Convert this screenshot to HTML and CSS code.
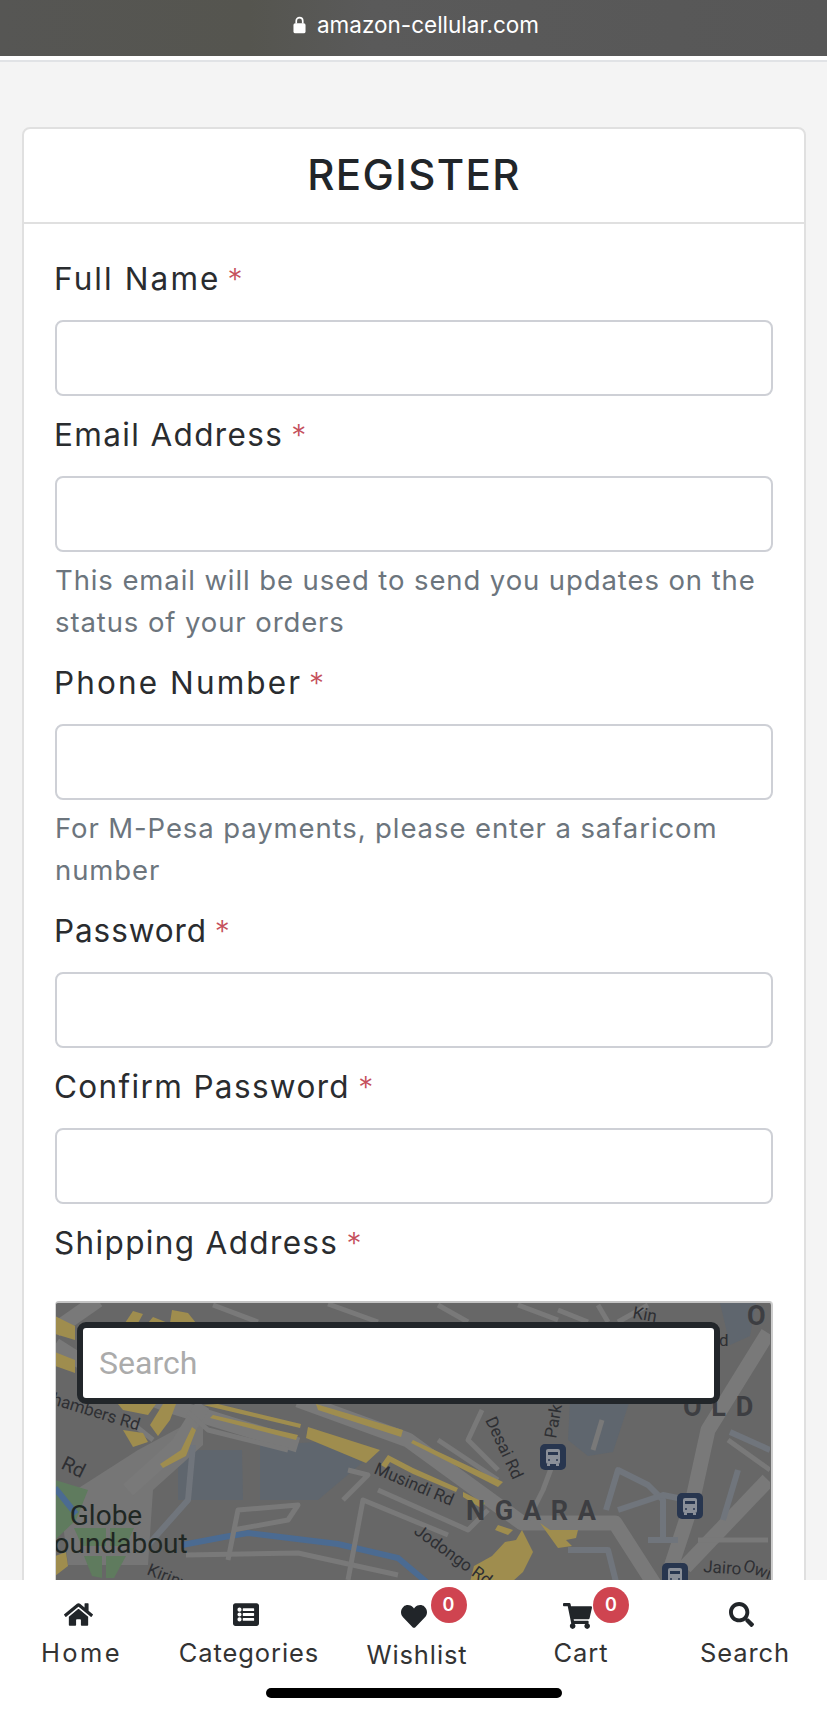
FILE: index.html
```html
<!DOCTYPE html>
<html lang="en">
<head>
<meta charset="utf-8">
<title>Register</title>
<link rel="stylesheet" href="styles.css">
</head>
<body>
<header class="urlbar">
  <svg class="lock" viewBox="0 0 14 19"><path d="M3.5 8V5a3.5 3.5 0 0 1 7 0v3" fill="none" stroke="#fff" stroke-width="1.8"/><rect x="0.5" y="7.5" width="13" height="11" rx="2" fill="#fff"/></svg>
  <span class="url">amazon-cellular.com</span>
</header>
<div class="rule"></div>
<main class="card">
  <h1 class="card-title">REGISTER</h1>
  <form class="card-body">
    <div class="group"><label class="label label-wide">Full Name <span class="req">*</span></label><input class="field" type="text"></div>
    <div class="group"><label class="label">Email Address <span class="req">*</span></label><input class="field" type="email"><p class="help">This email will be used to send you updates on the status of your orders</p></div>
    <div class="group"><label class="label label-wide">Phone Number <span class="req">*</span></label><input class="field" type="tel"><p class="help">For M-Pesa payments, please enter a safaricom number</p></div>
    <div class="group"><label class="label label-tight">Password <span class="req">*</span></label><input class="field" type="password"></div>
    <div class="group"><label class="label">Confirm Password <span class="req">*</span></label><input class="field" type="password"></div>
    <div class="group"><label class="label">Shipping Address <span class="req">*</span></label>
      <div class="map">
        <svg class="map-art" viewBox="57 1301 715 420">
          <defs>
            <g id="bus"><rect x="0" y="0" width="26" height="26" rx="5" class="bus-bg"/><rect x="6" y="5" width="14" height="15" rx="2" class="bus-fg"/><rect x="8" y="8" width="10" height="3" class="bus-bg"/><rect x="7" y="20" width="3" height="2" class="bus-fg"/><rect x="16" y="20" width="3" height="2" class="bus-fg"/><circle cx="9" cy="16" r="1" class="bus-bg"/><circle cx="17" cy="16" r="1" class="bus-bg"/></g>
          </defs>
          <rect x="57" y="1301" width="715" height="420" class="m-base"/>
          <polygon class="m-water" points="180,1450 244,1450 245,1500 180,1500"/>
          <polygon class="m-water" points="262,1445 320,1442 365,1462 320,1500 262,1500"/>
          <polygon class="m-water" points="572,1400 632,1400 615,1452 590,1456 570,1440"/>
          <polygon class="m-water" points="722,1303 758,1303 752,1336 732,1345"/>
          <polygon class="m-light" points="140,1450 205,1415 205,1445 155,1490 150,1565 70,1565 62,1500"/>
          <polygon class="m-green" points="57,1480 90,1490 78,1520 57,1540"/>
          <polygon class="m-green" points="76,1528 108,1528 108,1546 84,1546"/>
          <polygon class="m-green" points="112,1528 136,1528 128,1546 112,1546"/>
          <polygon class="m-green" points="86,1556 104,1556 104,1578 94,1576"/>
          <polygon class="m-green" points="108,1556 128,1556 116,1578 108,1578"/>
          <polyline class="m-river" points="57,1488 78,1514"/>
          <polyline class="m-river" points="184,1545 226,1537 250,1533 340,1544 400,1558 432,1585"/>
          <g class="m-road-w">
            <polyline points="57,1345 120,1385 170,1405 300,1445"/>
            <polyline points="300,1400 410,1440 524,1523 617,1523 660,1590"/>
            <polyline points="205,1405 180,1445 130,1490"/>
            <polyline points="770,1333 710,1430 694,1503 673,1567"/>
            <polyline points="770,1480 687,1567"/>
            <polyline points="57,1330 100,1300"/>
          </g>
          <g class="m-road">
            <polyline points="190,1412 210,1430 290,1450"/>
            <polyline points="230,1560 240,1510 300,1505 290,1520 235,1530"/>
            <polyline points="188,1555 300,1553 400,1575"/>
            <polyline points="345,1500 370,1475 350,1470"/>
            <polyline points="350,1580 365,1500 450,1535"/>
            <polyline points="380,1490 470,1530 490,1510"/>
            <polyline points="440,1440 470,1460 500,1480"/>
            <polyline points="560,1450 545,1490 530,1520"/>
            <polyline points="484,1410 470,1440 500,1470"/>
            <polyline points="604,1420 595,1450"/>
            <polyline points="700,1540 770,1540"/>
            <polyline points="520,1305 560,1320"/>
            <polyline points="560,1310 590,1322"/>
            <polyline points="650,1305 620,1322"/>
            <polyline points="600,1305 610,1322"/>
            <polyline points="440,1305 470,1322"/>
            <polyline points="215,1305 260,1322"/>
            <polyline points="330,1304 380,1322"/>
            <polyline points="730,1440 772,1470"/>
            <polyline points="130,1420 155,1440"/>
          </g>
          <g class="m-road-b">
            <polyline points="608,1510 620,1470 650,1485 665,1500 665,1540"/>
            <polyline points="620,1510 665,1495 680,1498"/>
            <polyline points="650,1540 680,1540"/>
            <polyline points="570,1550 610,1550 620,1590"/>
            <polyline points="195,1445 190,1500 150,1545"/>
            <polyline points="725,1520 740,1470"/>
            <polyline points="732,1432 772,1450"/>
          </g>
          <polygon class="m-yellow" points="57,1316 77,1326 77,1340 57,1334"/>
          <polygon class="m-yellow" points="57,1352 77,1360 77,1373 57,1366"/>
          <polygon class="m-yellow" points="127,1323 135,1311 145,1314 140,1323"/>
          <polygon class="m-yellow" points="150,1323 155,1317 170,1323"/>
          <polygon class="m-yellow" points="172,1323 174,1310 190,1313 198,1323"/>
          <polygon class="m-yellow" points="120,1404 158,1404 150,1415 125,1410"/>
          <polygon class="m-yellow" points="165,1404 178,1404 172,1420 160,1436 152,1425"/>
          <polygon class="m-yellow" points="125,1430 145,1433 150,1442 135,1447"/>
          <polygon class="m-yellow" points="194,1427 198,1430 188,1456 165,1468 162,1464 183,1450"/>
          <polygon class="m-yellow" points="205,1405 220,1404 303,1424 302,1428"/>
          <polygon class="m-yellow" points="212,1418 215,1415 300,1435 298,1440"/>
          <polygon class="m-yellow" points="310,1427 382,1450 368,1463 308,1438"/>
          <polygon class="m-yellow" points="318,1404 405,1430 403,1437 320,1410"/>
          <polygon class="m-yellow" points="415,1440 505,1482 500,1487 413,1443"/>
          <polygon class="m-yellow" points="383,1465 390,1455 415,1468 460,1488 458,1492 415,1474 392,1462 388,1468"/>
          <polygon class="m-yellow" points="465,1492 487,1503 483,1508 465,1497"/>
          <polygon class="m-yellow" points="500,1525 515,1530 510,1535 497,1530"/>
          <polygon class="m-yellow" points="524,1530 535,1552 525,1572 505,1590 470,1590 476,1566 494,1556 507,1542 518,1540"/>
          <polygon class="m-yellow" points="542,1523 552,1530 580,1530 578,1538 568,1540 574,1546 560,1548"/>
          <polygon class="m-yellow" points="57,1556 68,1552 70,1566 57,1576"/>
          <g class="ml">
            <text x="53" y="1404" transform="rotate(17 53 1404)">hambers Rd</text>
            <text class="ml-rd" x="62" y="1468" transform="rotate(26 62 1468)">Rd</text>
            <text x="148" y="1574" transform="rotate(22 148 1574)">Kirinyaga</text>
            <text x="375" y="1473" transform="rotate(23 375 1473)">Musindi Rd</text>
            <text x="415" y="1533" transform="rotate(36 415 1533)">Jodongo Rd</text>
            <text x="487" y="1420" transform="rotate(65 487 1420)">Desai Rd</text>
            <text x="558" y="1439" transform="rotate(-80 558 1439)">Park</text>
            <text x="634" y="1318" transform="rotate(10 634 1318)">Kin</text>
            <text x="721" y="1346">d</text>
            <text x="705" y="1572" transform="rotate(4 705 1572)">Jairo</text>
            <text x="744" y="1570" transform="rotate(20 744 1570)">Owi</text>
          </g>
          <text class="ml-big" x="108" y="1525">Globe</text>
          <text class="ml-big" x="114" y="1553">Roundabout</text>
          <text class="ml-area" x="468" y="1520">N G A R A</text>
          <text class="ml-area" x="685" y="1416">O L D</text>
          <text class="ml-area" x="749" y="1325">O</text>
          <use href="#bus" x="542" y="1444"/>
          <use href="#bus" x="679" y="1493"/>
          <use href="#bus" x="664" y="1563"/>
        </svg>
        <input class="map-search" type="text" placeholder="Search">
      </div>
    </div>
  </form>
</main>
<nav class="tabs">
  <a class="tab tab-home"><svg class="ico ico-home" viewBox="0 32 576 448"><path d="M280.37 148.26L96 300.11V464a16 16 0 0 0 16 16l112.06-.29a16 16 0 0 0 15.92-16V368a16 16 0 0 1 16-16h64a16 16 0 0 1 16 16v95.64a16 16 0 0 0 16 16.05L464 480a16 16 0 0 0 16-16V300L295.67 148.26a12.19 12.19 0 0 0-15.3 0zM571.6 251.47L488 182.56V44.05a12 12 0 0 0-12-12h-56a12 12 0 0 0-12 12v72.61L318.47 43a48 48 0 0 0-61 0L4.34 251.47a12 12 0 0 0-1.6 16.9l25.5 31A12 12 0 0 0 45.15 301l235.22-193.74a12.19 12.19 0 0 1 15.3 0L530.9 301a12 12 0 0 0 16.9-1.6l25.5-31a12 12 0 0 0-1.7-16.93z"/></svg><span>Home</span></a>
  <a class="tab"><svg class="ico" viewBox="0 32 512 448"><path d="M464 480H48c-26.51 0-48-21.49-48-48V80c0-26.51 21.49-48 48-48h416c26.51 0 48 21.49 48 48v352c0 26.51-21.49 48-48 48zM128 120c-22.091 0-40 17.909-40 40s17.909 40 40 40 40-17.909 40-40-17.909-40-40-40zm0 96c-22.091 0-40 17.909-40 40s17.909 40 40 40 40-17.909 40-40-17.909-40-40-40zm0 96c-22.091 0-40 17.909-40 40s17.909 40 40 40 40-17.909 40-40-17.909-40-40-40zm288-136v-32c0-6.627-5.373-12-12-12H204c-6.627 0-12 5.373-12 12v32c0 6.627 5.373 12 12 12h200c6.627 0 12-5.373 12-12zm0 96v-32c0-6.627-5.373-12-12-12H204c-6.627 0-12 5.373-12 12v32c0 6.627 5.373 12 12 12h200c6.627 0 12-5.373 12-12zm0 96v-32c0-6.627-5.373-12-12-12H204c-6.627 0-12 5.373-12 12v32c0 6.627 5.373 12 12 12h200c6.627 0 12-5.373 12-12z"/></svg><span>Categories</span></a>
  <a class="tab tab-low"><span class="icon-wrap"><svg class="ico" viewBox="0 32 512 448"><path d="M462.3 62.6C407.5 15.9 326 24.3 275.7 76.2L256 96.5l-19.7-20.3C186.1 24.3 104.5 15.9 49.7 62.6c-62.8 53.6-66.1 149.8-9.9 207.9l193.5 199.8c12.5 12.9 32.8 12.9 45.3 0l193.5-199.8c56.3-58.1 53-154.3-9.8-207.9z"/></svg><b class="badge">0</b></span><span>Wishlist</span></a>
  <a class="tab tab-low"><span class="icon-wrap"><svg class="ico ico-cart" viewBox="0 0 576 512"><path d="M528.12 301.319l47.273-208C578.806 78.301 567.391 64 551.99 64H159.208l-9.166-44.81C147.758 8.021 137.93 0 126.529 0H24C10.745 0 0 10.745 0 24v16c0 13.255 10.745 24 24 24h69.883l70.248 343.435C147.325 417.1 136 435.222 136 456c0 30.928 25.072 56 56 56s56-25.072 56-56c0-15.674-6.447-29.835-16.824-40h209.647C430.447 426.165 424 440.326 424 456c0 30.928 25.072 56 56 56s56-25.072 56-56c0-22.172-12.888-41.332-31.579-50.405l5.517-24.276c3.413-15.018-8.002-29.319-23.403-29.319H218.117l-6.545-32h293.145c11.206 0 20.92-7.754 23.403-18.681z"/></svg><b class="badge">0</b></span><span>Cart</span></a>
  <a class="tab"><svg class="ico ico-search" viewBox="0 0 512 512"><path d="M505 442.7L405.3 343c-4.5-4.5-10.6-7-17-7H372c27.6-35.3 44-79.7 44-128C416 93.1 322.9 0 208 0S0 93.1 0 208s93.1 208 208 208c48.3 0 92.7-16.4 128-44v16.3c0 6.4 2.5 12.5 7 17l99.7 99.7c9.4 9.4 24.6 9.4 33.9 0l28.3-28.3c9.4-9.4 9.4-24.6.1-34zM208 336c-70.7 0-128-57.2-128-128 0-70.7 57.2-128 128-128 70.7 0 128 57.2 128 128 0 70.7-57.2 128-128 128z"/></svg><span>Search</span></a>
  <div class="indicator"></div>
</nav>
</body>
</html>
```
FILE: styles.css
```css
* { box-sizing: border-box; }
html, body { margin: 0; padding: 0; }
body {
  width: 827px;
  height: 1713px;
  overflow: hidden;
  position: relative;
  background: #f4f4f4;
  font-family: Inter, "Noto Sans", sans-serif;
  color: #212529;
}
.urlbar {
  height: 56px;
  display: flex;
  align-items: center;
  justify-content: center;
  gap: 11px;
  padding: 0 0 7px;
  background: linear-gradient(90deg, #565654 0, #55554f 30%, #5a5a5a 45%, #575757 100%);
  color: #fff;
}
.lock { width: 13px; height: 18px; margin-left: 5px; }
.url { font-size: 22.5px; }
.rule { height: 6px; background: #fff; border-bottom: 2px solid #e1e3e6; }
.card {
  margin: 65px 21px 0 22px;
  background: #fff;
  border: 2px solid #e0e0e0;
  border-radius: 8px;
}
.card-title {
  margin: 0;
  height: 95px;
  border-bottom: 2px solid #e0e0e0;
  text-align: center;
  font-size: 42px;
  font-weight: 500;
  line-height: 92px;
  letter-spacing: 1.4px;
  color: #212529;
}
.card-body { padding: 33px 31px 0; }
.group { margin-bottom: 17px; }
.label {
  display: block;
  height: 47px;
  margin: 0 0 16px -1px;
  font-size: 31.5px;
  line-height: 44px;
  letter-spacing: 1.35px;
  color: #2a2c2f;
}
.label-wide { letter-spacing: 2.1px; }
.label-tight { letter-spacing: 0.9px; }
.req { margin-left: -2px; color: #c5505c; font-size: 30px; font-weight: 300; letter-spacing: 0; }
.label-wide .req { margin-left: -4px; }
.field {
  display: block;
  width: 100%;
  height: 76px;
  border: 2px solid #ced0d6;
  border-radius: 8px;
  background: #fff;
}
.help {
  margin: 7px 0 0;
  padding-bottom: 1px;
  font-size: 27.5px;
  line-height: 42px;
  letter-spacing: 0.9px;
  color: #6c757d;
}
.map {
  position: relative;
  margin-top: 33px;
  height: 420px;
  background: #6a6a6a;
  border-radius: 4px 4px 0 0;
  border-top: 2px solid #c4c4c4;
  border-left: 1px solid #d5d5d5;
  border-right: 2px solid #cdcdcd;
  overflow: hidden;
}
.map-art { position: absolute; left: -1px; top: -2px; width: 715px; height: 420px; display: block; }
.map-search {
  position: absolute;
  left: 21px;
  top: 19px;
  width: 643px;
  height: 82px;
  border: 6px solid #22262a;
  border-radius: 9px;
  background: #fff;
  padding: 0 0 0 16px;
  font-family: Roboto, sans-serif;
  font-size: 32px;
  outline: none;
}
.map-search::placeholder { color: #ababab; opacity: 1; }
.m-base { fill: #676767; }
.m-light { fill: #767676; }
.m-water { fill: #5f666e; }
.m-green { fill: #5f7b5e; }
.m-river { fill: none; stroke: #4b6b92; stroke-width: 6; }
.m-road-w polyline { fill: none; stroke: #797979; stroke-width: 15; stroke-linejoin: round; }
.m-road polyline { fill: none; stroke: #797979; stroke-width: 5; stroke-linejoin: round; }
.m-road-b polyline { fill: none; stroke: #70757c; stroke-width: 6; stroke-linejoin: round; }
.m-yellow { fill: #9f8d4e; }
.ml text { font-family: Roboto, sans-serif; font-size: 17px; fill: #2e2f33; }
.ml .ml-rd { font-size: 20px; }
.ml-big { font-family: Roboto, sans-serif; font-size: 28px; fill: #1f2723; text-anchor: middle; }
.ml-area { font-family: Roboto, sans-serif; font-size: 27px; font-weight: 700; fill: #3d3e42; letter-spacing: 1.5px; }
.bus-bg { fill: #28364f; }
.bus-fg { fill: #8a8f98; }
.tabs {
  position: absolute;
  left: 0;
  right: 0;
  top: 1580px;
  height: 133px;
  background: #fff;
  display: grid;
  grid-template-columns: 163px 172px 164px 164px 164px;
  align-content: start;
}
.tab {
  display: flex;
  flex-direction: column;
  align-items: center;
  padding-top: 23px;
  font-size: 25.5px;
  line-height: 32px;
  letter-spacing: 0.9px;
  color: #333;
  white-space: nowrap;
}
.tab-home { letter-spacing: 2.4px; }
.tab-low { padding-top: 25px; }
.ico { display: block; width: 26px; height: 23px; fill: #212529; margin: 0 0 11px -7px; }
.ico-home { width: 29px; }
.ico-cart { width: 29px; height: 26px; margin-bottom: 8px; margin-top: -2px; }
.ico-search { width: 25px; height: 25px; margin-top: -1px; margin-bottom: 10px; }
.icon-wrap { position: relative; display: block; }
.badge {
  position: absolute;
  left: 23px;
  top: -18px;
  width: 36px;
  height: 36px;
  border-radius: 50%;
  background: #cf4450;
  color: #fff;
  font-size: 18px;
  font-weight: 600;
  line-height: 36px;
  text-align: center;
  letter-spacing: 0;
}
.indicator {
  position: absolute;
  left: 266px;
  top: 108px;
  width: 296px;
  height: 10px;
  border-radius: 5px;
  background: #000;
}
```
